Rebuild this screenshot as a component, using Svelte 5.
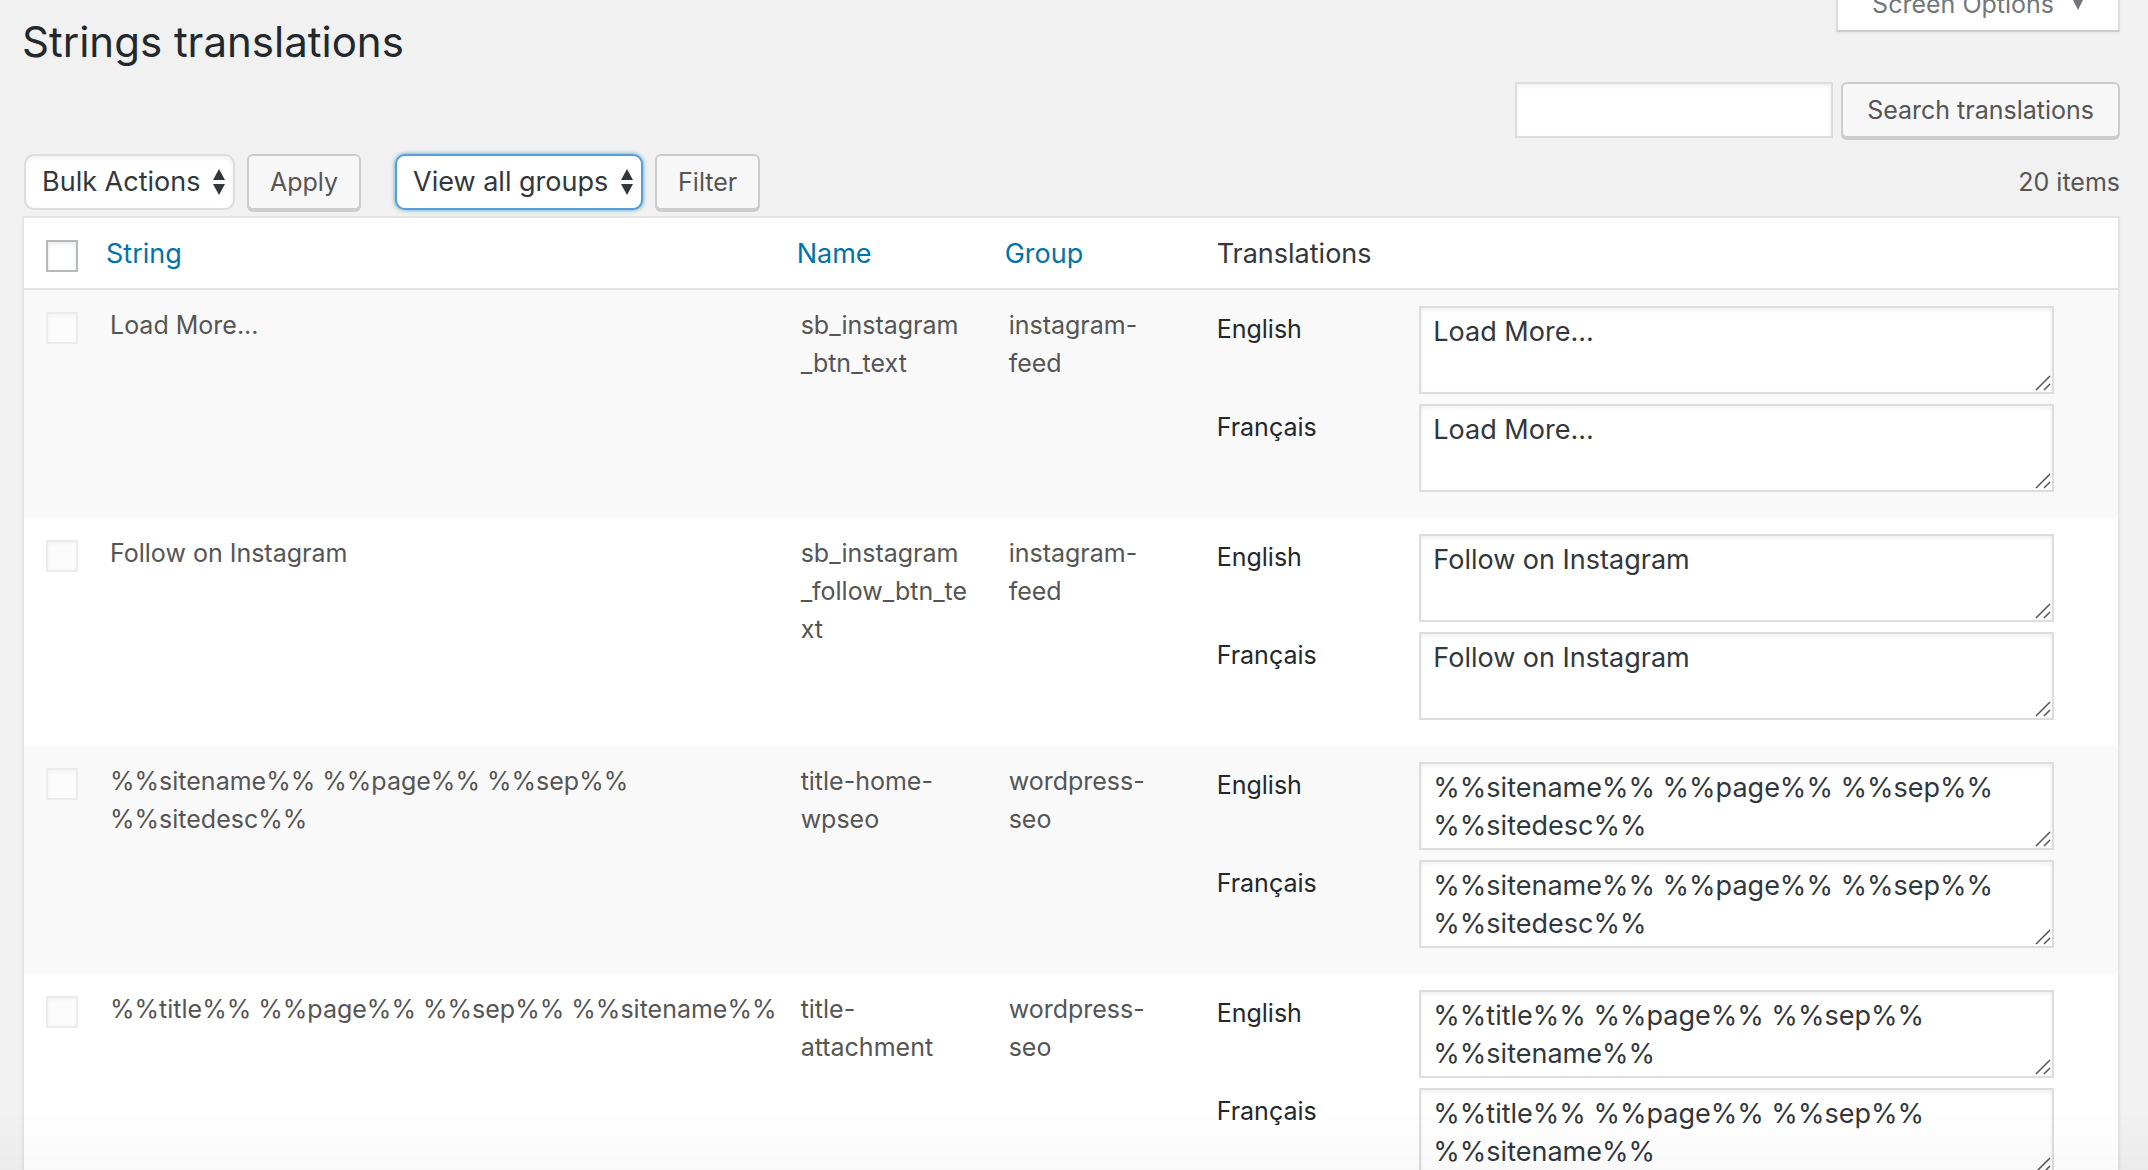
<script>
  // Names are split where a line may break ahead of an underscore.
  const rows = [
    { string: 'Load More...', name: ['sb_instagram', '_btn_text'], group: 'instagram-feed' },
    { string: 'Follow on Instagram', name: ['sb_instagram', '_follow_btn_text'], group: 'instagram-feed' },
    { string: '%%sitename%% %%page%% %%sep%% %%sitedesc%%', name: ['title-home-wpseo'], group: 'wordpress-seo' },
    { string: '%%title%% %%page%% %%sep%% %%sitename%%', name: ['title-attachment'], group: 'wordpress-seo' }
  ];
  const languages = [
    { code: 'en', label: 'English' },
    { code: 'fr', label: 'Français' }
  ];
</script>

{#snippet arrows()}
  <svg class="arrows" viewBox="0 0 14 26" aria-hidden="true">
    <path d="M7 0 13 11H1zM7 26 1 15h12z" fill="#32373c" />
  </svg>
{/snippet}

<div class="page">
  <div class="meta">
    <button type="button" class="screen-options">
      Screen Options
      <svg viewBox="0 0 12 12" aria-hidden="true"><path d="M0 0h12L6 12z" fill="#72777c" /></svg>
    </button>
  </div>

  <main>
    <h1>Strings translations</h1>

    <form class="search" onsubmit={(e) => e.preventDefault()}>
      <input type="search" aria-label="Search translations" />
      <button type="submit" class="button">Search translations</button>
    </form>

    <div class="toolbar">
      <div class="action">
        <div class="select">
          <select aria-label="Bulk Actions"><option>Bulk Actions</option></select>
          {@render arrows()}
        </div>
        <button type="button" class="button">Apply</button>
      </div>
      <div class="action">
        <div class="select focused">
          <select aria-label="Filter by group"><option>View all groups</option></select>
          {@render arrows()}
        </div>
        <button type="button" class="button">Filter</button>
      </div>
      <span class="count">20 items</span>
    </div>

    <table>
      <colgroup>
        <col class="c-check" />
        <col />
        <col class="c-name" />
        <col class="c-group" />
        <col class="c-translations" />
      </colgroup>
      <thead>
        <tr>
          <th class="check"><input type="checkbox" aria-label="Select all" /></th>
          <th class="sortable"><a href="#string">String</a></th>
          <th class="sortable"><a href="#name">Name</a></th>
          <th class="sortable"><a href="#group">Group</a></th>
          <th>Translations</th>
        </tr>
      </thead>
      <tbody>
        {#each rows as row, i}
          <tr>
            <td class="check"><input type="checkbox" disabled aria-label={row.string} /></td>
            <td class="string">{row.string}</td>
            <td>{#each row.name as part}<wbr />{part}{/each}</td>
            <td>{row.group}</td>
            <td>
              {#each languages as lang}
                <div class="translation">
                  <label for="{lang.code}-{i}">{lang.label}</label>
                  <div class="field">
                    <textarea id="{lang.code}-{i}" spellcheck="false" value={row.string}></textarea>
                    <svg class="grip" viewBox="0 0 16 16" aria-hidden="true">
                      <path d="M1 15 15 1M9 15l6-6" fill="none" stroke="#555" stroke-width="1.5" />
                    </svg>
                  </div>
                </div>
              {/each}
            </td>
          </tr>
        {/each}
      </tbody>
    </table>
  </main>
  <div class="fade"></div>
</div>

<style>
  :global(body) {
    background: #f1f1f1;
    overflow-x: hidden;
  }
  .page {
    font: 25px/38px Inter, Roboto, 'Liberation Sans', sans-serif;
    color: #555;
    height: 100vh;
    overflow: hidden;
  }
  .page * {
    box-sizing: border-box;
  }
  button,
  input,
  select,
  textarea {
    font: inherit;
    margin: 0;
  }
  .meta {
    display: flex;
    justify-content: flex-end;
    margin: -24px 28px 0;
  }
  .screen-options {
    display: flex;
    align-items: center;
    gap: 18px;
    height: 56px;
    padding: 0 34px;
    background: #fff;
    color: #72777c;
    border: 2px solid #ddd;
    border-bottom-color: #ccc;
    box-shadow: 0 2px 2px rgba(0, 0, 0, 0.04);
  }
  .screen-options svg {
    width: 12px;
    height: 12px;
  }
  main {
    padding: 0 28px 0 22px;
  }
  h1 {
    margin: -20px 0 0;
    font-size: 42px;
    font-weight: 400;
    line-height: 60px;
    color: #23282d;
  }
  .search {
    display: flex;
    justify-content: flex-end;
    gap: 8px;
    margin-top: 10px;
  }
  .search input {
    width: 318px;
    height: 56px;
    padding: 6px 10px;
    border: 2px solid #ddd;
    background: #fff;
    box-shadow: inset 0 2px 4px rgba(0, 0, 0, 0.07);
    appearance: none;
  }
  .button {
    height: 56px;
    padding: 0 21px;
    border: 2px solid #ccc;
    border-radius: 6px;
    background: #f7f7f7;
    color: #555;
    box-shadow: 0 2px 0 #ccc;
  }
  .search .button {
    padding: 0 24px;
  }
  .toolbar {
    display: flex;
    align-items: center;
    gap: 34px;
    margin: 16px 0 6px 2px;
  }
  .action {
    display: flex;
    gap: 12px;
  }
  .select {
    position: relative;
  }
  select {
    appearance: none;
    height: 56px;
    padding: 0 32px 0 16px;
    border: 2px solid #ddd;
    border-radius: 10px;
    background: #fff;
    color: #32373c;
    font-size: 27px;
    box-shadow: inset 0 2px 4px rgba(0, 0, 0, 0.07);
  }
  .focused select {
    border-color: #5b9dd9;
    box-shadow: 0 0 4px rgba(30, 140, 190, 0.8);
  }
  .arrows {
    position: absolute;
    right: 9px;
    top: 15px;
    width: 14px;
    height: 26px;
    pointer-events: none;
  }
  .count {
    margin-left: auto;
  }
  table {
    width: 100%;
    table-layout: fixed;
    border-collapse: separate;
    border-spacing: 0;
    border: 2px solid #e5e5e5;
    background: #fff;
    box-shadow: 0 2px 2px rgba(0, 0, 0, 0.04);
  }
  .c-check {
    width: 66px;
  }
  .c-name,
  .c-group {
    width: 208px;
  }
  .c-translations {
    width: 44%;
  }
  th {
    padding: 17px 20px 15px;
    border-bottom: 2px solid #e1e1e1;
    color: #32373c;
    font-size: 27px;
    font-weight: 400;
    text-align: left;
    vertical-align: top;
  }
  th.sortable {
    padding-left: 16px;
  }
  a {
    color: #0073aa;
    text-decoration: none;
  }
  td {
    padding: 16px 16px 16px 20px;
    vertical-align: top;
    overflow-wrap: break-word;
  }
  td:last-child {
    padding-right: 20px;
  }
  td.string {
    padding-right: 4px;
  }
  td:nth-child(4) {
    padding-right: 30px;
  }
  tbody tr:nth-child(odd) {
    background: #f9f9f9;
  }
  th.check,
  td.check {
    padding: 22px 0 0 22px;
  }
  .check input {
    display: block;
    appearance: none;
    width: 32px;
    height: 32px;
    border: 2px solid #b4b9be;
    background: #fff;
    box-shadow: inset 0 2px 4px rgba(0, 0, 0, 0.1);
  }
  .check input:disabled {
    border-color: #ececec;
    background: #fcfcfc;
    box-shadow: inset 0 2px 4px rgba(0, 0, 0, 0.03);
  }
  .translation {
    display: grid;
    grid-template-columns: 23% 72%;
    margin-bottom: 10px;
  }
  label {
    padding-top: 4px;
    color: #23282d;
  }
  .field {
    position: relative;
  }
  textarea {
    display: block;
    width: 100%;
    height: 88px;
    padding: 5px 12px 3px;
    border: 2px solid #ddd;
    background: #fff;
    color: #32373c;
    font-size: 27px;
    line-height: 38px;
    box-shadow: inset 0 2px 4px rgba(0, 0, 0, 0.07);
    resize: none;
    overflow: hidden;
  }
  .grip {
    position: absolute;
    right: 3px;
    bottom: 3px;
    width: 16px;
    height: 16px;
    pointer-events: none;
  }
  .fade {
    position: fixed;
    inset: auto 0 0;
    height: 60px;
    background: linear-gradient(rgba(0, 0, 0, 0), rgba(0, 0, 0, 0.025));
    pointer-events: none;
  }
</style>
